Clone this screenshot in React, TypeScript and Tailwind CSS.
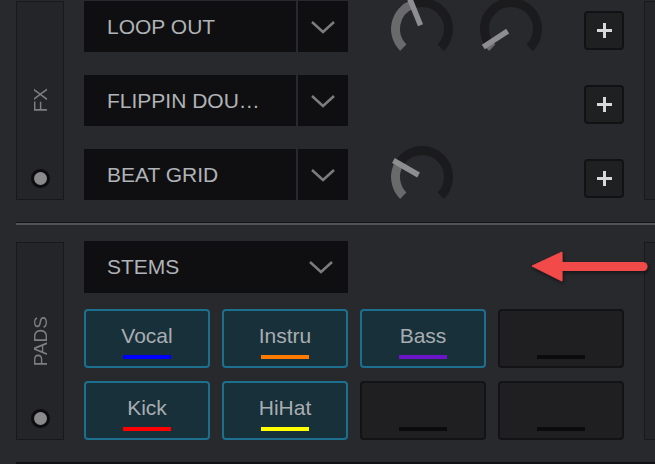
import React from 'react';

const font = { fontFamily: '"Liberation Sans", Arial, sans-serif' };

// point on a circle, angle measured clockwise from 12 o'clock
function pt(r: number, deg: number) {
  const a = (deg * Math.PI) / 180;
  return [32 + r * Math.sin(a), 32 - r * Math.cos(a)];
}

function arc(from: number, to: number, r = 26.5) {
  const [x1, y1] = pt(r, from);
  const [x2, y2] = pt(r, to);
  const large = to - from > 180 ? 1 : 0;
  return `M ${x1} ${y1} A ${r} ${r} 0 ${large} 1 ${x2} ${y2}`;
}

function Knob({ value }: { value: number }) {
  const [px1, py1] = pt(4, value);
  const [px2, py2] = pt(33, value);
  return (
    <svg width="64" height="64" viewBox="0 0 64 64" className="-mt-[4px] shrink-0 overflow-visible">
      <path d={arc(-135, 135)} fill="none" stroke="#1b1b1d" strokeWidth="9" />
      {value > -135 && <path d={arc(-135, value)} fill="none" stroke="#6a6a6c" strokeWidth="9" />}
      <line x1={px1} y1={py1} x2={px2} y2={py2} stroke="#8e8e90" strokeWidth="5.5" />
    </svg>
  );
}

function Chevron() {
  return (
    <svg width="26" height="14" viewBox="0 0 26 14">
      <path d="M2 2 L13 12 L24 2" fill="none" stroke="#7c7c7e" strokeWidth="2.5" />
    </svg>
  );
}

function PlusButton() {
  return (
    <div className="w-[40px] h-[39px] mt-[10px] rounded-[4px] bg-[#1f2022] border-2 border-[#111214] flex items-center justify-center">
      <svg width="17" height="17" viewBox="0 0 17 17">
        <path d="M8.5 1 V16 M1 8.5 H16" stroke="#d6d8da" strokeWidth="3" />
      </svg>
    </div>
  );
}

function SidePanel({ label, className }: { label: string; className: string }) {
  return (
    <div className={`relative w-[48px] shrink-0 bg-[#242528] border border-[#19191b] flex items-center justify-center ${className}`}>
      <span className="[writing-mode:vertical-rl] rotate-180 text-[19px] leading-none text-[#7b7f83]">{label}</span>
      <div className="absolute bottom-[11px] w-[19px] h-[19px] rounded-full bg-[#0d0d0f] flex items-center justify-center">
        <div className="w-[13px] h-[13px] rounded-full bg-[#8a8a8c]" />
      </div>
    </div>
  );
}

function FxRow({ name, knobs }: { name: string; knobs: (number | null)[] }) {
  return (
    <div className="h-[51px] flex items-start">
      <div className="w-[212px] h-[51px] bg-[#0f0f11] flex items-center pl-[23px] text-[21px] text-[#b0b3b7] whitespace-nowrap overflow-hidden">
        {name}
      </div>
      <div className="w-[50px] h-[51px] ml-[2px] bg-[#0f0f11] flex items-center justify-center">
        <Chevron />
      </div>
      <div className="ml-[42px] w-[153px] flex gap-[25px]">
        {knobs.map((k, i) => (k === null ? <div key={i} className="w-[64px]" /> : <Knob key={i} value={k} />))}
      </div>
      <div className="ml-[41px]">
        <PlusButton />
      </div>
    </div>
  );
}

const pads = [
  { label: 'Vocal', color: 'bg-[#0000ff]' },
  { label: 'Instru', color: 'bg-[#ff7b00]' },
  { label: 'Bass', color: 'bg-[#6a16c8]' },
  null,
  { label: 'Kick', color: 'bg-[#ff0000]' },
  { label: 'HiHat', color: 'bg-[#ffff00]' },
  null,
  null,
];

export default function App() {
  return (
    <div className="relative w-[655px] h-[464px] overflow-hidden bg-[#28292c]" style={font}>
      {/* FX section */}
      <div className="h-[222px] pt-[1px] pl-[16px] flex gap-[20px]">
        <SidePanel label="FX" className="h-[199px]" />
        <div className="flex flex-col gap-[23px]">
          <FxRow name="LOOP OUT" knobs={[-22, -123]} />
          <FxRow name="FLIPPIN DOU…" knobs={[null, null]} />
          <FxRow name="BEAT GRID" knobs={[-60, null]} />
        </div>
        <div className="w-[48px] h-[199px] shrink-0 bg-[#242528] border border-[#19191b]" />
      </div>

      {/* separator */}
      <div className="ml-[16px] h-[1px] bg-[#151517]" />
      <div className="ml-[16px] h-[2px] bg-[#515255]" />

      {/* PADS section */}
      <div className="h-[237px] pt-[16px] pl-[16px] flex gap-[20px]">
        <SidePanel label="PADS" className="h-[198px] mt-[1px]" />
        <div className="flex flex-col">
          <div className="w-[264px] h-[52px] bg-[#0f0f11] flex items-center justify-between pl-[23px] pr-[14px] text-[21px] text-[#b0b3b7]">
            <span>STEMS</span>
            <Chevron />
          </div>
          <div className="mt-[16px] grid grid-cols-[repeat(4,126px)] gap-x-[12px] gap-y-[13px]">
            {pads.map((p, i) =>
              p ? (
                <div
                  key={i}
                  className="h-[59px] rounded-[4px] bg-[#17303a] border-2 border-[#1d6f8f] flex flex-col items-center justify-end pb-[7px]"
                >
                  <span className="text-[21px] leading-none text-[#a9adb1] mb-[9px]">{p.label}</span>
                  <div className={`w-[48px] h-[4px] ${p.color}`} />
                </div>
              ) : (
                <div
                  key={i}
                  className="h-[59px] rounded-[4px] bg-[#1f1f21] border-2 border-[#131315] flex flex-col items-center justify-end pb-[7px]"
                >
                  <div className="w-[48px] h-[4px] bg-[#0b0b0c]" />
                </div>
              )
            )}
          </div>
        </div>
        <div className="w-[48px] h-[198px] mt-[1px] shrink-0 bg-[#242528] border border-[#19191b]" />
      </div>
      <div className="ml-[16px] h-[3px] bg-[#111113]" />

      {/* annotation arrow */}
      <svg className="absolute left-[525px] top-[245px]" width="130" height="45" viewBox="525 245 130 45">
        <defs>
          <filter id="sh" x="-10%" y="-30%" width="130%" height="170%">
            <feDropShadow dx="1" dy="2" stdDeviation="2" floodColor="#000" floodOpacity="0.5" />
          </filter>
        </defs>
        <g filter="url(#sh)" fill="#f24848" stroke="#f24848">
          <line x1="558" y1="266.5" x2="643" y2="266.5" strokeWidth="9" strokeLinecap="round" />
          <polygon points="532,266 562,252 562,281" strokeWidth="1" strokeLinejoin="round" />
        </g>
      </svg>
    </div>
  );
}
